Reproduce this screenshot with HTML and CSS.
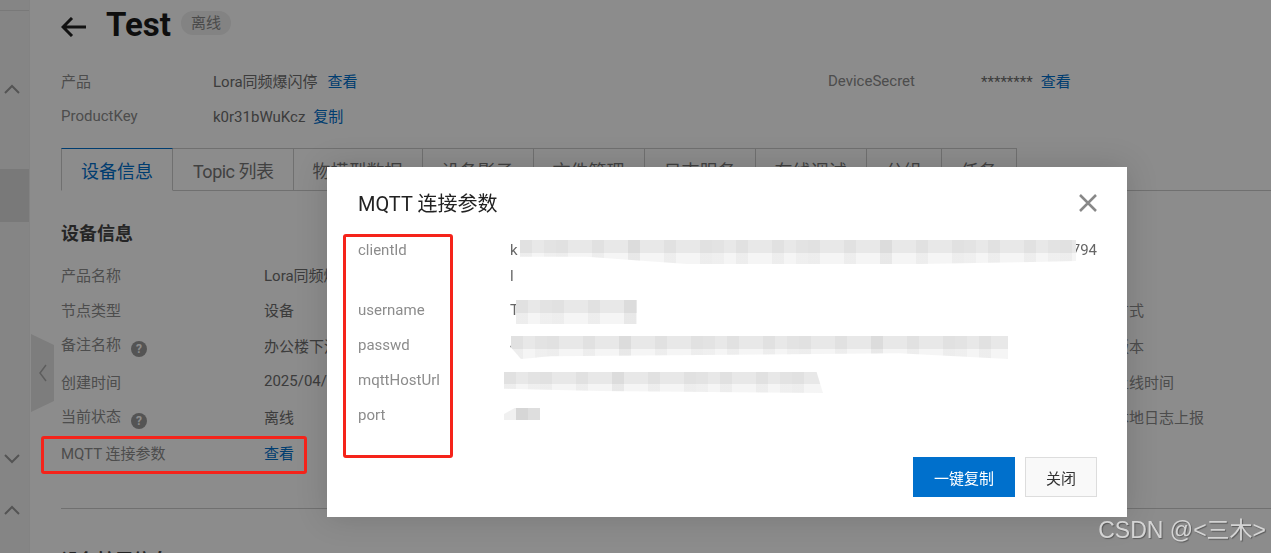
FILE: index.html
```html
<!DOCTYPE html>
<html>
<head>
    <meta charset="UTF-8" />
    <title>MQTT 连接参数</title>

    <link rel="stylesheet" href="styles.css">
</head>
<body>
    <div class="page">
        <div class="sidebar">
            <div class="side-line"></div>
            <svg class="side-arrow first" viewBox="0 0 16 10"><path d="M1 9 L8 2 L15 9" /></svg>
            <div class="side-active"></div>
            <svg class="side-arrow second" viewBox="0 0 16 10"><path d="M1 1 L8 8 L15 1" /></svg>
            <svg class="side-arrow third" viewBox="0 0 16 10"><path d="M1 9 L8 2 L15 9" /></svg>
        </div>

        <div class="handle">
            <svg viewBox="0 0 10 18"><path d="M8 1 L2 9 L8 17" /></svg>
        </div>

        <div class="main">
            <div class="head">
                <svg class="back" viewBox="0 0 26 20"><path d="M25 10 H2 M11 1 L2 10 L11 19" /></svg>
                <h1>Test</h1>
                <span class="badge">离线</span>
            </div>

            <div class="summary">
                <span class="label">产品</span>
                <span class="value">Lora同频爆闪停<a class="link">查看</a></span>
                <span class="label">DeviceSecret</span>
                <span class="value">********<a class="link tight">查看</a></span>
                <span class="label">ProductKey</span>
                <span class="value">k0r31bWuKcz<a class="link tight">复制</a></span>
            </div>

            <div class="tabs">
                <div class="tab active">设备信息</div>
                <div class="tab topic">Topic 列表</div>
                <div class="tab">物模型数据</div>
                <div class="tab">设备影子</div>
                <div class="tab">文件管理</div>
                <div class="tab">日志服务</div>
                <div class="tab">在线调试</div>
                <div class="tab">分组</div>
                <div class="tab">任务</div>
            </div>

            <h2>设备信息</h2>

            <div class="info">
                <span class="label">产品名称</span>
                <span class="value">Lora同频爆</span>
                <span></span>

                <span class="label">节点类型</span>
                <span class="value">设备</span>
                <span class="label">认证方式</span>

                <span class="label">备注名称<i class="help">?</i></span>
                <span class="value">办公楼下流</span>
                <span class="label">固件版本</span>

                <span class="label">创建时间</span>
                <span class="value">2025/04/01</span>
                <span class="label">最后上线时间</span>

                <span class="label">当前状态<i class="help">?</i></span>
                <span class="value">离线</span>
                <span class="label">设备本地日志上报</span>

                <span class="label">MQTT 连接参数</span>
                <span class="value"><a class="link flush">查看</a></span>
                <span></span>
            </div>

            <div class="divider"></div>

            <h2 class="next">设备扩展信息</h2>
        </div>
    </div>

    <div class="mask"></div>

    <div class="dialog">
        <div class="dialog-head">
            <span>MQTT 连接参数</span>
            <svg class="close" viewBox="0 0 18 18"><path d="M1 1 L17 17 M17 1 L1 17" /></svg>
        </div>

        <div class="params">
            <span class="param-name">clientId</span>
            <div class="param-val">
                <div class="client-line"><span>k</span><span>7794</span></div>
                <div class="client-more">l</div>
            </div>
            <span class="param-name">username</span>
            <span class="param-val">T</span>
            <span class="param-name">passwd</span>
            <span class="param-val">4</span>
            <span class="param-name">mqttHostUrl</span>
            <span class="param-val"></span>
            <span class="param-name">port</span>
            <span class="param-val"></span>
        </div>

        <div class="dialog-foot">
            <button class="btn primary">一键复制</button>
            <button class="btn">关闭</button>
        </div>

        <div class="smear smear1"></div>
        <div class="smear smear2"></div>
        <div class="smear smear3"></div>
        <div class="smear smear4"></div>
        <div class="smear smear5"></div>
    </div>

    <div class="mark mark-row"></div>
    <div class="mark mark-names"></div>

    <div class="watermark">CSDN @&lt;三木&gt;</div>
</body>
</html>
```

FILE: styles.css
```css
* {
    box-sizing: border-box;
}

body {
    margin: 0;
    height: 553px;
    overflow: hidden;
    font-family: Roboto, "Noto Sans CJK SC", sans-serif;
    font-size: 15px;
    color: #7f7f7f;
    background-color: #fff;
}

.page {
    display: flex;
    height: 553px;
    overflow: hidden;
}

.sidebar {
    flex: 0 0 30px;
    background-color: #f3f3f3;
    display: flex;
    flex-direction: column;
    border-right: 1px solid #eee;
}

.side-line {
    margin-top: 10px;
    height: 1px;
    background-color: #ddd;
}

.side-arrow {
    width: 16px;
    height: 10px;
    margin-left: 4px;
    fill: none;
    stroke: #999;
    stroke-width: 2;
}

.side-arrow.first {
    margin-top: 73px;
}

.side-active {
    margin-top: 75px;
    height: 53px;
    background-color: #dcdcdc;
}

.side-arrow.second {
    margin-top: 232px;
}

.side-arrow.third {
    margin-top: 41px;
}

.handle {
    position: absolute;
    left: 31px;
    top: 334px;
    width: 23px;
    height: 78px;
    background-color: #e4e4e4;
    clip-path: polygon(0 0, 100% 14%, 100% 86%, 0 100%);
    display: flex;
    align-items: center;
    padding-left: 7px;
}

.handle svg {
    width: 10px;
    height: 18px;
    fill: none;
    stroke: #aaa;
    stroke-width: 1.5;
}

.main {
    flex: 1;
    padding-left: 31px;
    min-width: 0;
}

.head {
    display: flex;
    align-items: center;
    height: 50px;
}

.back {
    width: 26px;
    height: 20px;
    margin-top: 4px;
    fill: none;
    stroke: #222;
    stroke-width: 3;
}

h1 {
    margin: 0 10px 0 19px;
    font-size: 33px;
    font-weight: 700;
    line-height: 50px;
    color: #1a1a1a;
}

.badge {
    width: 50px;
    height: 24px;
    margin-bottom: 4px;
    border-radius: 12px;
    background-color: #eee;
    text-align: center;
    line-height: 24px;
    color: #888;
}

.summary {
    display: grid;
    grid-template-columns: 152px 615px 153px 1fr;
    grid-auto-rows: 35px;
    align-items: center;
    margin-top: 13px;
}

.label {
    color: #8c8c8c;
    white-space: nowrap;
}

.value {
    color: #6e6e6e;
    white-space: nowrap;
}

.link {
    color: #0070cc;
    margin-left: 10px;
}

.link.tight {
    margin-left: 8px;
}

.link.flush {
    margin-left: 0;
}

.tabs {
    display: flex;
    margin-top: 15px;
    height: 43px;
    border-bottom: 1px solid #ccc;
    font-size: 18px;
}

.tab {
    padding: 0 19px;
    height: 43px;
    line-height: 46px;
    border-top: 1px solid #ccc;
    border-right: 1px solid #ccc;
    color: #777;
    white-space: nowrap;
}

.tab.topic {
    padding: 0 19px 0 20px;
    letter-spacing: -0.5px;
}

.tab.active {
    border-top: 1px solid #0070cc;
    border-left: 1px solid #ccc;
    border-bottom: 1px solid #fff;
    color: #0070cc;
}

h2 {
    margin: 29px 0 0;
    font-size: 18px;
    line-height: 28px;
    font-weight: 700;
    color: #444;
}

.info {
    display: grid;
    grid-template-columns: 203px 820px 1fr;
    grid-auto-rows: 35.6px;
    align-items: center;
    margin-top: 8.5px;
}

.help {
    display: inline-block;
    width: 16px;
    height: 16px;
    margin-left: 10px;
    border-radius: 50%;
    background-color: #999;
    color: #fff;
    font-size: 12px;
    font-style: normal;
    font-weight: 700;
    line-height: 16px;
    text-align: center;
    vertical-align: -3px;
}

.divider {
    margin-top: 38px;
    height: 1px;
    background-color: #ccc;
}

h2.next {
    margin-top: 38px;
}

.mask {
    position: fixed;
    top: 0;
    left: 0;
    width: 100%;
    height: 100%;
    background-color: rgba(0, 0, 0, 0.45);
}

.dialog {
    position: absolute;
    left: 327px;
    top: 167px;
    width: 800px;
    height: 350px;
    background-color: #fff;
    box-shadow: 0 0 30px rgba(0, 0, 0, 0.15);
    display: flex;
    flex-direction: column;
}

.dialog-head {
    display: flex;
    justify-content: space-between;
    height: 66px;
    padding: 27px 30px 0 31px;
    font-size: 20px;
    line-height: 20px;
    color: #222;
}

.close {
    width: 18px;
    height: 18px;
    fill: none;
    stroke: #888;
    stroke-width: 2.5;
}

.params {
    display: grid;
    grid-template-columns: 152px 1fr;
    grid-auto-rows: auto;
    padding: 0 30px 0 31px;
    line-height: 35px;
}

.param-name {
    color: #8c8c8c;
}

.param-val {
    color: #666;
}

.client-line {
    display: flex;
    justify-content: space-between;
}

.client-more {
    line-height: 25px;
    margin-top: -4px;
    padding-bottom: 4px;
}

.dialog-foot {
    margin-top: auto;
    padding: 0 30px 20px;
    display: flex;
    justify-content: flex-end;
    gap: 10px;
}

.btn {
    height: 40px;
    min-width: 72px;
    border: 1px solid #ddd;
    background-color: #f9f9f9;
    color: #333;
    font-family: inherit;
    font-size: 15px;
    padding: 0;
}

.btn.primary {
    width: 102px;
    border: none;
    background-color: #0070cc;
    color: #fff;
}

.smear {
    position: absolute;
    background-image:
        repeating-linear-gradient(90deg, rgba(0, 0, 0, 0.03) 0 12px, transparent 12px 36px),
        repeating-linear-gradient(90deg, transparent 0 24px, rgba(0, 0, 0, 0.025) 24px 36px, transparent 36px 84px),
        linear-gradient(#e8e8e8 0 55%, #f5f5f5 55% 100%);
}

.smear1 {
    left: 193px;
    top: 73px;
    width: 556px;
    height: 24px;
    clip-path: polygon(0 0, 100% 0, 100% 88%, 72% 100%, 30% 100%, 12% 70%, 0 70%);
}

.smear2 {
    left: 189px;
    top: 133px;
    width: 121px;
    height: 24px;
}

.smear3 {
    left: 184px;
    top: 169px;
    width: 497px;
    height: 23px;
    clip-path: polygon(0 0, 100% 0, 100% 100%, 78% 75%, 8% 88%, 2% 100%, 0 50%);
}

.smear4 {
    left: 177px;
    top: 205px;
    width: 319px;
    height: 21px;
    clip-path: polygon(0 0, 98% 0, 100% 100%, 30% 90%, 0 80%);
}

.smear5 {
    left: 177px;
    top: 241px;
    width: 36px;
    height: 12px;
    background-image:
        linear-gradient(90deg, #f0f0f0 0 12px, #d6d6d6 12px 24px, #dedede 24px 36px);
    clip-path: polygon(30% 0, 100% 0, 100% 100%, 0 100%, 0 50%);
}

.mark {
    position: absolute;
    border: 3px solid #f5231a;
    border-radius: 3px;
}

.mark-row {
    left: 41px;
    top: 436px;
    width: 266px;
    height: 38px;
}

.mark-names {
    left: 343px;
    top: 234px;
    width: 110px;
    height: 224px;
}

.watermark {
    position: absolute;
    right: 5px;
    top: 515px;
    font-family: "Liberation Sans", "Noto Sans CJK SC", sans-serif;
    font-size: 23px;
    line-height: 30px;
    color: #d4d4d4;
    text-shadow: 1px 1px 1px rgba(0, 0, 0, 0.35);
    white-space: nowrap;
}
```
